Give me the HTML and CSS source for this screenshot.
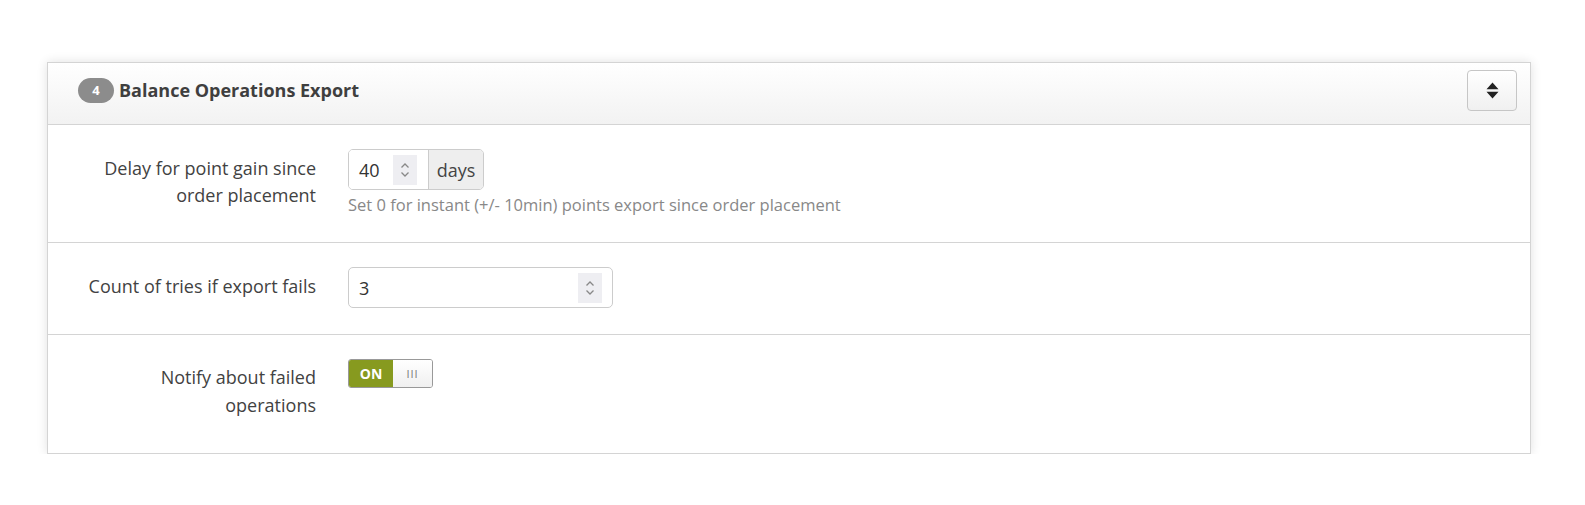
FILE: index.html
```html
<!DOCTYPE html>
<html>
<head>
<meta charset="utf-8">
<link rel="stylesheet" href="styles.css">
</head>
<body>
<div class="panel">
  <div class="panel-head">
    <span class="badge">4</span>
    <span class="title">Balance Operations Export</span>
    <button class="sort-btn" type="button">
      <svg width="13" height="19" viewBox="0 0 13 19"><path d="M6.5 1.5 L12.5 8.3 H0.5 Z M0.5 10.7 H12.5 L6.5 17.5 Z" fill="#222"/></svg>
    </button>
  </div>
  <div class="row row-1">
    <div class="label">Delay for point gain since order placement</div>
    <div class="field">
      <div class="input-group">
        <div class="num small"><span class="val">40</span><span class="spin"><svg width="12" height="20" viewBox="0 0 12 20"><path d="M2.5 7.5 L6 4 L9.5 7.5 M2.5 12.5 L6 16 L9.5 12.5" stroke="#888" stroke-width="1.3" fill="none"/></svg></span></div>
        <div class="addon">days</div>
      </div>
      <div class="help">Set 0 for instant (+/- 10min) points export since order placement</div>
    </div>
  </div>
  <div class="row row-2">
    <div class="label">Count of tries if export fails</div>
    <div class="field">
      <div class="num wide"><span class="val">3</span><span class="spin"><svg width="12" height="20" viewBox="0 0 12 20"><path d="M2.5 7.5 L6 4 L9.5 7.5 M2.5 12.5 L6 16 L9.5 12.5" stroke="#888" stroke-width="1.3" fill="none"/></svg></span></div>
    </div>
  </div>
  <div class="row row-3">
    <div class="label">Notify about failed operations</div>
    <div class="field">
      <div class="toggle"><span class="on">ON</span><span class="off">III</span></div>
    </div>
  </div>
</div>
</body>
</html>
```
FILE: styles.css
```css
html, body { margin: 0; padding: 0; background: #fff; }
body {
  font-family: "Open Sans", "Noto Sans", sans-serif;
  color: #444;
  padding: 62px 0 0 47px;
}
.panel {
  width: 1482px;
  border: 1px solid #d4d4d4;
  background: #fff;
  box-shadow: 0 0 10px rgba(0,0,0,0.12);
}
.panel-head {
  height: 62px;
  box-sizing: border-box;
  display: flex;
  align-items: center;
  padding: 0 13px 7px 30px;
  background: linear-gradient(#ffffff, #f2f2f2);
  border-bottom: 1px solid #d4d4d4;
}
.badge {
  display: inline-flex;
  align-items: center;
  justify-content: center;
  width: 36px;
  height: 25px;
  border-radius: 13px;
  background: #8c8c8c;
  color: #fff;
  font-size: 13px;
  font-weight: 700;
}
.title {
  margin-left: 5px;
  font-size: 18px;
  font-weight: 700;
  color: #3f3f3f;
  flex: 1;
}
.sort-btn {
  width: 50px;
  height: 41px;
  border: 1px solid #c6c6c6;
  border-radius: 4px;
  background: linear-gradient(#fff, #f0f0f0);
  display: flex;
  align-items: center;
  justify-content: center;
  padding: 0;
}
.row {
  display: flex;
  box-sizing: border-box;
  padding-top: 24px;
  border-bottom: 1px solid #d4d4d4;
}
.row:last-child { border-bottom: none; }
.row-1 { height: 118px; }
.row-2 { height: 92px; }
.row-3 { height: 118px; }
.label {
  width: 268px;
  padding: 6px 0 0 33px;
  box-sizing: border-box;
  text-align: right;
  font-size: 18px;
  line-height: 27px;
  color: #424242;
}
.row-3 .label { padding-top: 5px; line-height: 27.5px; }
.field { margin-left: 32px; }
.input-group {
  display: flex;
  height: 41px;
  box-sizing: border-box;
  border: 1px solid #ccc;
  border-radius: 5px;
  width: 136px;
  overflow: hidden;
}
.num {
  display: flex;
  align-items: center;
  box-sizing: border-box;
  font-size: 18px;
  color: #333;
  background: #fff;
}
.num .val { flex: 1; padding-left: 10px; }
.num .spin {
  width: 24px;
  height: 30px;
  background: #eeeef2;
  display: flex;
  align-items: center;
  justify-content: center;
}
.num.small { width: 80px; height: 39px; padding-right: 11px; border-right: 1px solid #ccc; }
.num.wide {
  width: 265px;
  height: 41px;
  border: 1px solid #ccc;
  border-radius: 5px;
  padding-right: 10px;
}
.addon {
  flex: 1;
  background: #eee;
  display: flex;
  align-items: center;
  justify-content: center;
  font-size: 18px;
  color: #444;
}
.help {
  margin-top: 4px;
  font-size: 16.5px;
  color: #888;
  line-height: 22px;
}
.toggle {
  display: flex;
  width: 85px;
  height: 29px;
  border: 1px solid #999;
  border-radius: 3px;
  overflow: hidden;
  box-sizing: border-box;
}
.toggle .on {
  width: 44px;
  background: #879a1f;
  color: #fff;
  font-size: 14px;
  font-weight: 700;
  display: flex;
  align-items: center;
  justify-content: center;
}
.toggle .off {
  flex: 1;
  background: linear-gradient(#fff, #f0f0f0);
  color: #777;
  font-size: 11px;
  letter-spacing: 1px;
  display: flex;
  align-items: center;
  justify-content: center;
}
```
